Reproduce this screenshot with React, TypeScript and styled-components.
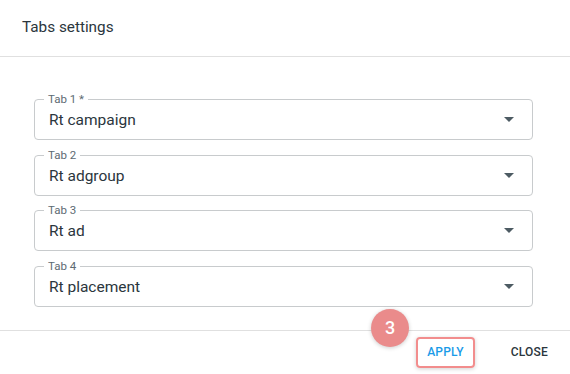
import React from 'react';
import styled, {createGlobalStyle} from 'styled-components';

const GlobalStyle = createGlobalStyle`
  html, body {
    margin: 0;
    padding: 0;
    background: #fff;
  }
  body {
    font-family: Roboto, "Liberation Sans", sans-serif;
    color: #2b363d;
  }
`;

const Dialog = styled.div`
  width: 570px;
  height: 374px;
  display: flex;
  flex-direction: column;
  background: #fff;
`;

const Header = styled.div`
  height: 57px;
  display: flex;
  align-items: center;
  padding: 0 22px 2px;
  box-sizing: border-box;
  border-bottom: 1px solid #e0e0e0;
  font-size: 15.3px;
  font-weight: 400;
  color: #2b363d;
`;

const Body = styled.div`
  padding: 42px 37px 23px 34px;
  display: flex;
  flex-direction: column;
  gap: 14.5px;
  border-bottom: 1px solid #e0e0e0;
`;

const Field = styled.div`
  height: 41px;
  box-sizing: border-box;
  border: 1px solid #c8cbcd;
  border-radius: 4px;
  padding: 0 14px;
  display: flex;
  align-items: center;
  position: relative;
`;

const Label = styled.span`
  position: absolute;
  top: -8px;
  left: 9px;
  font-size: 11.5px;
  line-height: 14px;
  color: #5d6a72;
  padding: 0 4px;
  background: #fff;
`;

const Value = styled.span`
  flex: 1;
  font-size: 15.5px;
  color: #2b363d;
  padding-top: 1px;
`;

const Caret = styled.svg`
  width: 10px;
  height: 5px;
  margin-right: 4px;
`;

const Footer = styled.div`
  flex: 1;
  display: flex;
  align-items: center;
  justify-content: flex-end;
  padding: 0 15px 0 0;
  gap: 29px;
  position: relative;
`;

const Button = styled.button<{primary?: boolean}>`
  background: none;
  border: none;
  font-family: inherit;
  font-size: 12px;
  font-weight: 500;
  letter-spacing: 0.2px;
  padding: 0 7px;
  height: 27px;
  color: ${p => p.primary ? '#1a9be8' : '#2b363d'};
`;

const Highlight = styled.div`
  border: 2px solid #f28d8d;
  border-radius: 4px;
  box-shadow: 0 1px 4px rgba(0, 0, 0, 0.18);
  padding: 0 2px;
  display: flex;
`;

const Badge = styled.div`
  position: absolute;
  left: 371px;
  top: -22px;
  width: 38px;
  height: 38px;
  border-radius: 50%;
  background: #ea8b8b;
  box-shadow: 0 1px 4px rgba(0, 0, 0, 0.2);
  color: #fff;
  font-size: 18px;
  font-weight: 500;
  display: flex;
  align-items: center;
  justify-content: center;
`;

const tabs = [
  {label: 'Tab 1 *', value: 'Rt campaign'},
  {label: 'Tab 2', value: 'Rt adgroup'},
  {label: 'Tab 3', value: 'Rt ad'},
  {label: 'Tab 4', value: 'Rt placement'},
];

export default function App() {
  return (
    <Dialog>
      <GlobalStyle/>
      <Header>Tabs settings</Header>
      <Body>
        {tabs.map(t => (
          <Field key={t.label}>
            <Label>{t.label}</Label>
            <Value>{t.value}</Value>
            <Caret viewBox="0 0 10 5">
              <path d="M0 0 L10 0 L5 5 Z" fill="#4d5b63"/>
            </Caret>
          </Field>
        ))}
      </Body>
      <Footer>
        <Badge>3</Badge>
        <Highlight>
          <Button primary>APPLY</Button>
        </Highlight>
        <Button>CLOSE</Button>
      </Footer>
    </Dialog>
  );
}
